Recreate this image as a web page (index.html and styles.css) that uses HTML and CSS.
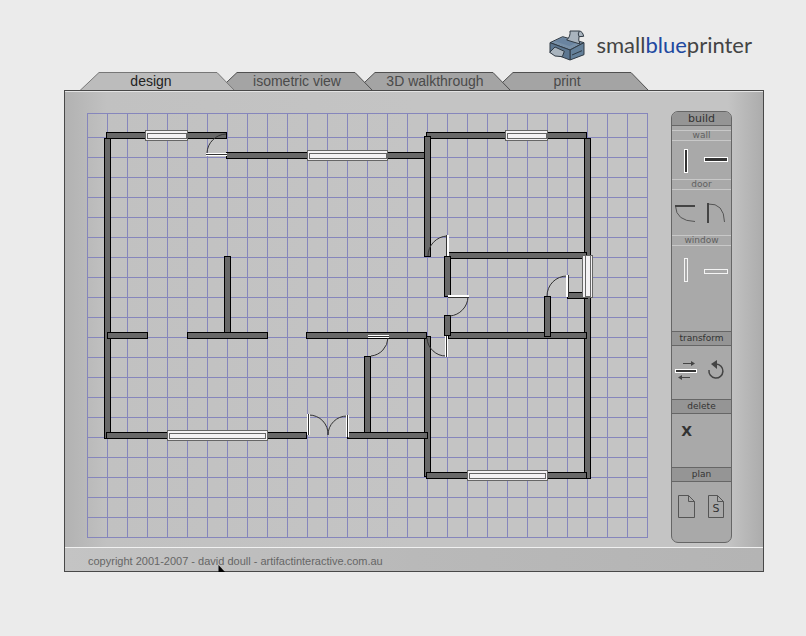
FILE: index.html
```html
<!DOCTYPE html>
<html lang="en">
<head>
<meta charset="UTF-8">
<title>smallblueprinter</title>
<link rel="stylesheet" href="styles.css">
</head>
<body>

<header class="logo">
    <svg class="printer" viewBox="24 24 114 102">
        <polygon class="top" points="30,68 68,50 132,68 90,90"/>
        <polygon class="side" points="90,90 132,68 132,104 90,120"/>
        <polygon class="front" points="30,68 90,90 90,120 30,97"/>
        <polygon class="slot" points="44,64 68,54 112,67 88,78"/>
        <path class="sheet" d="M80 60 Q92 50 90 33 L118 33 Q128 34 131 49 L117 50 Q114 60 120 72 Z"/>
        <path class="sheet" d="M118 33 Q112 42 117 50"/>
        <polygon class="sheet" points="29,97 45,81 73,94 67,110 45,108"/>
        <path class="sheet" d="M96 105 L126 92"/>
    </svg>
    <h1>small<span>blue</span>printer</h1>
</header>

<nav class="tabs">
    <button class="tab active"><svg viewBox="0 0 156 19"><path d="M0.5 19 L20 .5 H138 L156 19"/></svg><span>design</span></button>
    <button class="tab"><svg viewBox="0 0 156 19"><path d="M0.5 19 L20 .5 H138 L156 19"/></svg><span>isometric view</span></button>
    <button class="tab"><svg viewBox="0 0 156 19"><path d="M0.5 19 L20 .5 H138 L156 19"/></svg><span>3D walkthrough</span></button>
    <button class="tab last"><svg viewBox="0 0 156 19"><path d="M0.5 19 L20 .5 H138 L156 19"/></svg><span>print</span></button>
</nav>

<main class="panel">
    <div class="workspace">
        <svg class="plan" viewBox="0 0 561 425">
            <defs>
                <pattern id="cols" width="20" height="20" patternUnits="userSpaceOnUse"><rect class="line" width="1" height="20"/></pattern>
                <pattern id="rows" y="4" width="20" height="20" patternUnits="userSpaceOnUse"><rect class="line" width="20" height="1"/></pattern>
            </defs>
            <rect width="561" height="425" fill="url(#cols)"/>
            <rect y="24" width="561" height="401" fill="url(#rows)"/>
            <rect class="line" width="561" height="1"/>

            <!-- walls -->
            <g class="wall">
                <rect x="19.5" y="19.5" width="120" height="6"/>
                <rect x="139.5" y="39.5" width="201" height="6"/>
                <rect x="339.5" y="19.5" width="160" height="6"/>
                <rect x="17.5" y="25.5" width="6" height="300"/>
                <rect x="337.5" y="23.5" width="6" height="120"/>
                <rect x="497.5" y="25.5" width="6" height="340"/>
                <rect x="360.5" y="139.5" width="139" height="6"/>
                <rect x="357.5" y="143.5" width="6" height="40"/>
                <rect x="480.5" y="179.5" width="20" height="6"/>
                <rect x="361.5" y="219.5" width="138" height="6"/>
                <rect x="357.5" y="202.5" width="6" height="20"/>
                <rect x="457.5" y="183.5" width="6" height="40"/>
                <rect x="137.5" y="143.5" width="6" height="76"/>
                <rect x="20.5" y="219.5" width="40" height="6"/>
                <rect x="100.5" y="219.5" width="80" height="6"/>
                <rect x="337.5" y="223.5" width="6" height="140"/>
                <rect x="219.5" y="219.5" width="120" height="6"/>
                <rect x="277.5" y="243.5" width="6" height="76"/>
                <rect x="19.5" y="319.5" width="200" height="6"/>
                <rect x="260.5" y="319.5" width="80" height="6"/>
                <rect x="339.5" y="359.5" width="160" height="6"/>
            </g>

            <!-- windows -->
            <g class="window">
                <rect x="58.5" y="17.5" width="42" height="10"/><rect x="60.5" y="20.5" width="39" height="5"/>
                <rect x="220.5" y="37.5" width="80" height="10"/><rect x="222.5" y="40.5" width="77" height="5"/>
                <rect x="418.5" y="17.5" width="42" height="10"/><rect x="420.5" y="20.5" width="39" height="5"/>
                <rect x="80.5" y="317.5" width="100" height="10"/><rect x="82.5" y="320.5" width="96" height="5"/>
                <rect x="380.5" y="357.5" width="80" height="10"/><rect x="382.5" y="360.5" width="76" height="5"/>
                <rect x="495.5" y="142.5" width="10" height="42"/><rect x="498.5" y="142.5" width="5" height="41"/>
            </g>

            <!-- doors -->
            <g class="swing">
                <path d="M120 41V40A20 20 0 0 1 139 21"/>
                <path d="M341 143A20 20 0 0 1 360 123"/>
                <path d="M381 184A20 20 0 0 1 363 203"/>
                <path d="M340 225A19 19 0 0 0 359 243"/>
                <path d="M460 183A20 20 0 0 1 480 163"/>
                <path d="M301 225A19 19 0 0 1 284 243"/>
                <path d="M222 302A19 19 0 0 1 241 322"/>
                <path d="M260 303A19 19 0 0 0 241 322"/>
            </g>
            <path class="leaf" d="M119 41.5H140M360.5 122V143M361 183.5H382M359.5 223V244M480.5 162V184M281 223.5H302M221.5 301V322M260.5 302V324"/>
            <path class="leaf-edge" d="M119 41.5H140M359.5 122V143M361 184.5H382M359.5 223V244M481.5 162V184M281 223.5H302M221.5 301V322M260.5 302V324"/>
        </svg>

        <aside class="tools">
            <h2 class="build">build</h2>
            <h3>wall</h3>
            <div class="pair wall-tools">
                <button aria-label="Vertical wall"><svg viewBox="0 0 28 28"><rect x="11" y="3" width="4" height="24" fill="#fff"/><rect x="12" y="4" width="2" height="22" fill="#333"/></svg></button>
                <button aria-label="Horizontal wall"><svg viewBox="0 0 28 28"><rect x="2" y="11" width="24" height="5" fill="#fff"/><rect x="3" y="12" width="22" height="3" fill="#333"/></svg></button>
            </div>
            <h3>door</h3>
            <div class="pair door-tools">
                <button aria-label="Horizontal door"><svg viewBox="0 0 28 28"><path class="thin" d="M2.5 6Q3 21 22 21.5"/><path class="thick" d="M2 6H22"/></svg></button>
                <button aria-label="Vertical door"><svg viewBox="0 0 28 28"><path class="thin" d="M6 4Q22 3 22.5 22"/><path class="thick" d="M6 3V23"/></svg></button>
            </div>
            <h3>window</h3>
            <div class="pair window-tools">
                <button aria-label="Vertical window"><svg viewBox="0 0 28 28"><rect class="pane" x="11.5" y="2.5" width="3" height="23"/></svg></button>
                <button aria-label="Horizontal window"><svg viewBox="0 0 28 28"><rect class="pane" x="2.5" y="13.5" width="23" height="4"/></svg></button>
            </div>

            <h2>transform</h2>
            <div class="pair">
                <button aria-label="Flip"><svg viewBox="0 0 28 28"><rect x="2" y="13" width="22" height="4" fill="#fff"/><rect x="3" y="14" width="20" height="2" fill="#333"/><path class="thin dark" d="M10 7.5H20M7 21.5H17"/><path d="M18 5L22 7.5L18 10ZM9 19L5 21.5L9 24Z" fill="#444"/></svg></button>
                <button aria-label="Rotate"><svg viewBox="0 0 28 28"><path class="curve" d="M7 14A7 7 0 1 0 14 8"/><path d="M15 4V13L9 8Z" fill="#444"/></svg></button>
            </div>

            <h2>delete</h2>
            <div class="pair delete-tools">
                <button class="remove">X</button>
            </div>

            <h2>plan</h2>
            <div class="pair plan-tools">
                <button aria-label="New plan"><svg viewBox="0 0 28 28"><path class="page" d="M5.5 3.5H15.5L21.5 9.5V25.5H5.5ZM15.5 3.5V9.5H21.5"/></svg></button>
                <button aria-label="Save plan"><svg viewBox="0 0 28 28"><path class="page" d="M6.5 3.5H15.5L21.5 9.5V25.5H6.5ZM15.5 3.5V9.5H21.5"/><text x="14" y="20" text-anchor="middle">S</text></svg></button>
            </div>
        </aside>
    </div>

    <footer class="credits">
        copyright 2001-2007 - david doull - artifactinteractive.com.au
        <svg class="pointer" viewBox="0 0 7 7"><path d="M.5 0V7H7Z"/></svg>
    </footer>
</main>

</body>
</html>
```

FILE: styles.css
```css
/* --- Page --- */
* {
    box-sizing: border-box;
}

body {
    margin: 0;
    padding: 0 42px 0 64px;
    min-height: 100vh;
    background: #ebebeb;
    font-family: "Liberation Sans", Arial, sans-serif;
    color: #444;
}

button {
    margin: 0;
    padding: 0;
    border: 0;
    background: none;
    font: inherit;
    color: inherit;
    cursor: pointer;
}

/* --- Logo --- */
.logo {
    display: flex;
    justify-content: flex-end;
    align-items: center;
    gap: 10px;
    height: 72px;
    padding: 18px 12px 0 0;
}

.logo h1 {
    margin: 0;
    font: 400 22px/28px Lato, sans-serif;
    color: #444;
}

.logo h1 span {
    color: #2048a0;
}

.printer {
    width: 38px;
    height: 34px;
    stroke: #303a44;
    stroke-width: 3;
    stroke-linejoin: round;
}

.printer .top { fill: #7890a8; }
.printer .side { fill: #64809a; }
.printer .front { fill: #5c7690; }
.printer .slot { fill: #6a84a0; stroke: none; }
.printer .sheet { fill: #a9b4be; }

/* --- Tabs --- */
.tabs {
    display: flex;
    padding-left: 15px;
    height: 18px;
}

.tab {
    position: relative;
    width: 156px;
    height: 19px;
    padding-left: 4px;
    margin-right: -18px;
    font-size: 14px;
    line-height: 19px;
    color: #4a4a4a;
}

.tab:nth-child(1) { z-index: 4; }
.tab:nth-child(2) { z-index: 3; }
.tab:nth-child(3) { z-index: 2; }

.tab svg {
    position: absolute;
    inset: 0;
    width: 100%;
    height: 100%;
    fill: #a4a4a4;
    stroke: #505050;
}

.tab span {
    position: relative;
}

.tab.active {
    padding: 0 12px 0 0;
    color: #222;
}

.tab.active svg {
    fill: #bcbcbc;
    stroke: #777;
}

.tab.last {
    padding: 0 8px 0 0;
}

/* --- Main panel --- */
.panel {
    position: relative;
    z-index: 5;
    border: 1px solid #484848;
    background: linear-gradient(to right, #b2b2b2, #c1c1c1 6%, #c4c4c4 50%, #c4c4c4 95%, #acacac);
    box-shadow: inset 0 1px 0 #e4e4e4;
}

.workspace {
    display: flex;
    align-items: flex-start;
    gap: 23px;
    padding: 20px 31px 4px 22px;
}

.plan {
    flex: 1;
    min-width: 0;
    margin-top: 2px;
}

.line {
    fill: #8686bc;
}

.wall {
    fill: #686868;
    stroke: #000;
}

.window {
    fill: #f4f2f4;
    stroke: #666;
}

.swing {
    fill: none;
    stroke: #333;
}

.leaf {
    stroke: #fff;
    stroke-width: 3;
}

.leaf-edge {
    stroke: #333;
}

/* --- Tools --- */
.tools {
    width: 61px;
    overflow: hidden;
    border: 1px solid #666;
    border-radius: 7px;
    background: #a9a9a9;
    font-family: "DejaVu Sans", Verdana, sans-serif;
    text-align: center;
}

.tools h2 {
    margin: 0;
    height: 15px;
    border: solid #666;
    border-width: 1px 0;
    background: #959595;
    font-size: 9px;
    font-weight: normal;
    line-height: 13px;
    color: #333;
}

.tools h2.build {
    height: 14px;
    margin-bottom: 4px;
    border-top: 0;
    font-size: 11px;
}

.tools h3 {
    margin: 0;
    height: 11px;
    border: solid #c8c8c8;
    border-width: 1px 0;
    font-size: 9px;
    font-weight: normal;
    line-height: 9px;
    color: #606060;
}

.pair {
    display: grid;
    grid-template-columns: 1fr 1fr;
    align-items: start;
    height: 53px;
}

.pair button {
    height: 48px;
}

.pair svg {
    display: block;
    width: 28px;
    height: 28px;
    margin: 0 auto;
}

.wall-tools { height: 38px; }
.wall-tools button { height: 38px; }
.door-tools { height: 45px; }
.window-tools { height: 85px; }
.plan-tools { height: 60px; }

.pair .remove {
    height: 34px;
    font-size: 14px;
    font-weight: bold;
    color: #333;
}

.thin {
    fill: none;
    stroke: #555;
}

.dark {
    stroke: #444;
}

.thick {
    stroke: #444;
    stroke-width: 2;
}

.pane {
    fill: none;
    stroke: #f4f4f4;
}

.curve {
    fill: none;
    stroke: #444;
    stroke-width: 1.5;
}

.page {
    fill: none;
    stroke: #555;
}

.pair text {
    font-size: 11px;
    fill: #333;
}

/* --- Footer --- */
.credits {
    position: relative;
    height: 24px;
    padding-left: 23px;
    border-top: 1px solid #f0f0f0;
    background: linear-gradient(to right, #c4c4c4, #b9b9b9 50%, #b4b4b4);
    font-size: 11px;
    line-height: 26px;
    color: #666;
}

.pointer {
    position: absolute;
    left: 153px;
    bottom: -1px;
    width: 7px;
    height: 7px;
}
```
